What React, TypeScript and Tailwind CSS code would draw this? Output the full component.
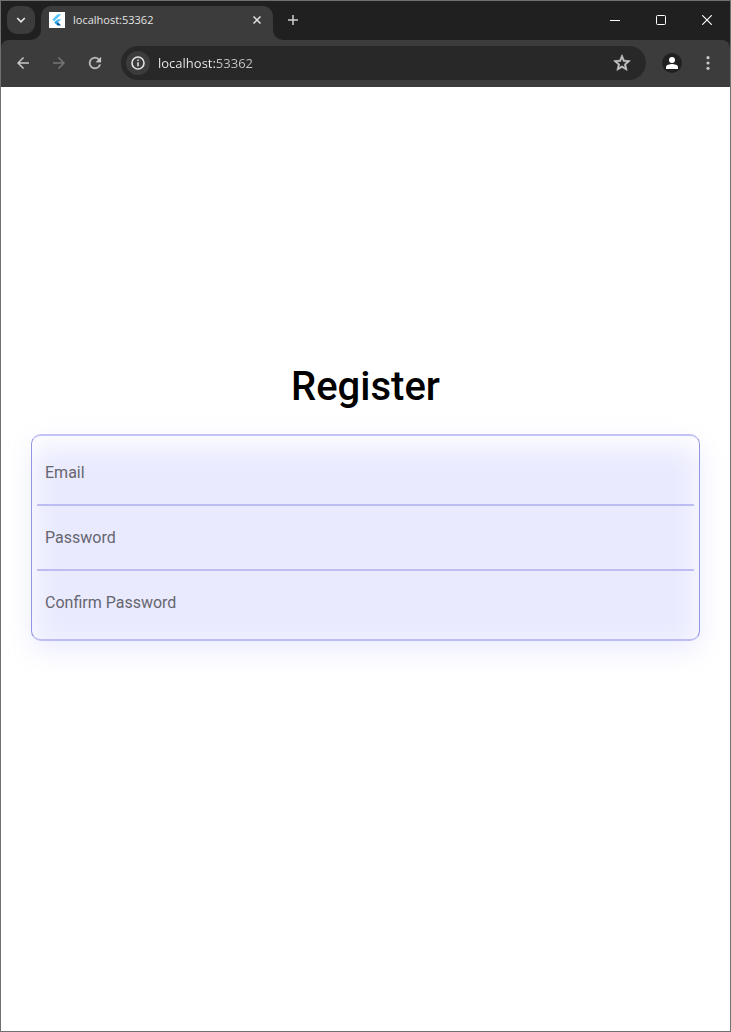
import React from 'react';

function TabStrip() {
  return (
    <header className="flex h-[39px] bg-[#202020]">
      <button
        aria-label="Search tabs"
        className="mt-[5px] ml-[6px] flex size-7 shrink-0 items-center justify-center rounded-[10px] bg-[#3c3c3c] text-[#e8e8e8]"
      >
        <svg width="10" height="10" viewBox="0 0 10 10" fill="none" stroke="currentColor" strokeWidth="1.7">
          <path d="M1.2 3 5 6.8 8.8 3" />
        </svg>
      </button>
      <div className="relative mt-[5px] ml-[6px] flex w-[232px] items-center rounded-t-[10px] bg-[#3c3c3c] pr-2 pb-[6px] pl-2">
        <svg className="absolute bottom-0 -left-[10px]" width="10" height="10" viewBox="0 0 10 10" fill="#3c3c3c">
          <path d="M10 0v10H0A10 10 0 0 0 10 0Z" />
        </svg>
        <svg className="absolute -right-[10px] bottom-0" width="10" height="10" viewBox="0 0 10 10" fill="#3c3c3c">
          <path d="M0 0v10h10A10 10 0 0 1 0 0Z" />
        </svg>
        <svg width="16" height="16" viewBox="0 0 16 16" className="mr-2 shrink-0">
          <path d="M0 0h16v16H0z" fill="#fff" />
          <path d="M8.6 2.2h3.6L5.2 9.2 3.4 7.4Z" fill="#54c5f8" />
          <path d="M8.7 7.2h3.5L9 10.4l-1.8 1.8L5.4 10.4Z" fill="#54b8f0" />
          <path d="m7.2 12.1 1.8-1.8 3.2 3.3H8.7Z" fill="#01579b" />
          <path d="m5.4 10.4 1.8-1.8L9 10.4l-1.8 1.8Z" fill="#29a3e8" />
        </svg>
        <span className="grow truncate font-['Open_Sans','Noto_Sans',sans-serif] text-[11px] leading-4 text-[#e3e3e3]">
          localhost:53362
        </span>
        <button aria-label="Close tab" className="flex size-4 items-center justify-center text-[#e3e3e3]">
          <svg width="8" height="8" viewBox="0 0 8 8" stroke="currentColor" strokeWidth="1.5">
            <path d="m.5.5 7 7m0-7-7 7" />
          </svg>
        </button>
      </div>
      <button aria-label="New tab" className="mt-[5px] ml-[6px] flex size-7 items-center justify-center text-[#d0d0d0]">
        <svg width="10" height="10" viewBox="0 0 10 10" stroke="currentColor" strokeWidth="1.5">
          <path d="M5 0v10M0 5h10" />
        </svg>
      </button>
      <div className="ml-auto flex h-[38px] text-white">
        <button aria-label="Minimize" className="flex w-[46px] items-center justify-center">
          <svg width="10" height="10" viewBox="0 0 10 10" fill="currentColor">
            <path d="M0 5h10v1H0z" />
          </svg>
        </button>
        <button aria-label="Maximize" className="flex w-[46px] items-center justify-center">
          <svg width="10" height="10" viewBox="0 0 10 10" fill="none" stroke="currentColor">
            <rect x=".5" y=".5" width="9" height="9" rx="1" />
          </svg>
        </button>
        <button aria-label="Close window" className="flex w-[46px] items-center justify-center">
          <svg width="10" height="10" viewBox="0 0 10 10" stroke="currentColor" strokeWidth="1.1">
            <path d="m.2.2 9.6 9.6m0-9.6L.2 9.8" />
          </svg>
        </button>
      </div>
    </header>
  );
}

function Toolbar() {
  return (
    <div className="bg-[#202020]">
      <nav className="flex h-[47px] items-center rounded-t-[8px] bg-[#3c3c3c] pr-2 pb-px pl-2 text-[#c7c7c7]">
        <button aria-label="Back" className="flex size-7 items-center justify-center">
          <svg width="18" height="18" viewBox="0 0 24 24" fill="currentColor">
            <path d="M20 11H7.83l5.59-5.59L12 4l-8 8 8 8 1.41-1.41L7.83 13H20v-2z" />
          </svg>
        </button>
        <button aria-label="Forward" className="ml-2 flex size-7 items-center justify-center text-[#757575]">
          <svg width="18" height="18" viewBox="0 0 24 24" fill="currentColor">
            <path d="m12 4-1.41 1.41L16.17 11H4v2h12.17l-5.58 5.59L12 20l8-8z" />
          </svg>
        </button>
        <button aria-label="Reload" className="ml-2 flex size-7 items-center justify-center">
          <svg width="18" height="18" viewBox="0 0 24 24" fill="currentColor" stroke="currentColor" strokeWidth=".3">
            <path d="M17.65 6.35A7.96 7.96 0 0 0 12 4a8 8 0 1 0 7.73 10h-2.08A6 6 0 1 1 12 6c1.66 0 3.14.69 4.22 1.78L13 11h7V4l-2.35 2.35z" />
          </svg>
        </button>
        <div className="ml-3 flex h-[34px] min-w-0 grow items-center rounded-full bg-[#282828] pr-[14px] pl-[5px]">
          <button
            aria-label="View site information"
            className="flex size-6 shrink-0 items-center justify-center rounded-full bg-[#3c3c3c] text-[#e3e3e3]"
          >
            <svg width="16" height="16" viewBox="0 0 16 16" fill="none" stroke="currentColor" strokeWidth="1.6">
              <circle cx="8" cy="8" r="6" />
              <path d="M8 7.2v4M8 4.5v1.6" />
            </svg>
          </button>
          <input
            aria-label="Address"
            defaultValue="localhost:53362"
            className="ml-2 min-w-0 grow bg-linear-to-r from-[#f0f0f0] from-[58px] to-[#c7c7c7] to-[58px] bg-clip-text font-['Open_Sans','Noto_Sans',sans-serif] text-[13px] leading-5 text-transparent outline-none"
          />
          <button aria-label="Bookmark this tab" className="flex size-5 shrink-0 items-center justify-center">
            <svg width="20" height="20" viewBox="0 0 24 24" fill="currentColor" stroke="currentColor" strokeWidth=".7">
              <path d="m22 9.24-7.19-.62L12 2 9.19 8.63 2 9.24l5.46 4.73L5.82 21 12 17.27 18.18 21l-1.63-7.03L22 9.24zM12 15.4l-3.76 2.27 1-4.28-3.32-2.88 4.38-.38L12 6.1l1.71 4.04 4.38.38-3.32 2.88 1 4.28L12 15.4z" />
            </svg>
          </button>
        </div>
        <button
          aria-label="Profile"
          className="ml-4 flex size-5 shrink-0 items-center justify-center rounded-full bg-[#202020] text-white"
        >
          <svg width="12" height="12" viewBox="0 0 12 12" fill="currentColor">
            <circle cx="6" cy="3" r="3" />
            <path d="M0 12V9.8C0 7.9 4 7 6 7s6 .9 6 2.8V12Z" />
          </svg>
        </button>
        <button aria-label="Menu" className="ml-3 flex size-7 shrink-0 items-center justify-center">
          <svg width="4" height="14" viewBox="0 0 4 14" fill="currentColor">
            <circle cx="2" cy="1.7" r="1.6" />
            <circle cx="2" cy="7" r="1.6" />
            <circle cx="2" cy="12.3" r="1.6" />
          </svg>
        </button>
      </nav>
    </div>
  );
}

const fields = [
  { name: 'email', label: 'Email', type: 'email' },
  { name: 'password', label: 'Password', type: 'password' },
  { name: 'confirm', label: 'Confirm Password', type: 'password' },
];

export default function App() {
  return (
    <div className="flex min-h-screen flex-col border border-[#707070] bg-white">
      <TabStrip />
      <Toolbar />
      <main className="flex grow flex-col justify-center px-[30px] pb-[113px] font-[Roboto,sans-serif]">
        <h1 className="mb-6 text-center text-[40px] leading-[46px] font-medium text-black">Register</h1>
        <form className="relative isolate rounded-[10px] border border-y-2 border-x-[#9396dd] border-y-[#c5c4f5] p-[5px]">
          <div className="absolute inset-x-0 top-[10px] -bottom-[10px] -z-10 rounded-[10px] bg-[#8f94fb]/20 blur-[14px]" />
          {fields.map((field) => (
            <div key={field.name} className="border-b-2 border-[#bdbdf1] p-2 last:border-b-0">
              <input
                name={field.name}
                type={field.type}
                aria-label={field.label}
                placeholder={field.label}
                className="block h-[47px] w-full bg-transparent text-[16px] text-[#333] outline-none placeholder:text-[#66656f]"
              />
            </div>
          ))}
        </form>
      </main>
    </div>
  );
}
